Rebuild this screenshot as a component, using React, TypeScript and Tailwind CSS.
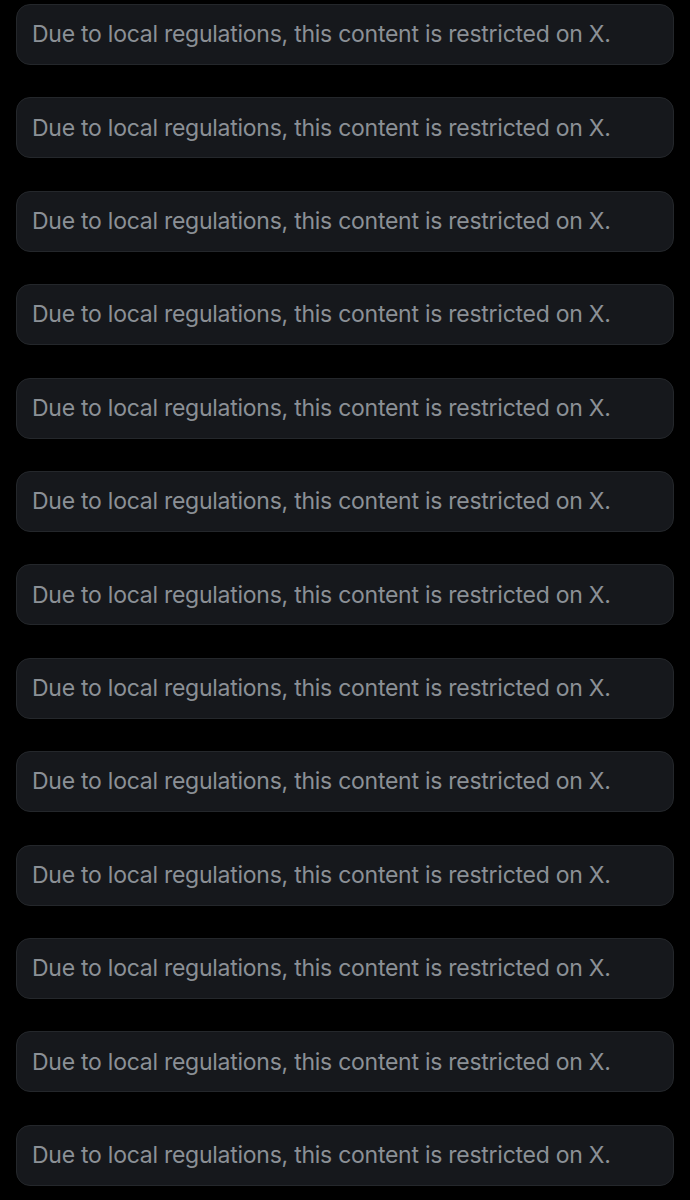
import React from "react";

const MESSAGE = "Due to local regulations, this content is restricted on X.";

const RestrictedNotice: React.FC = () => {
  return (
    <div className="h-[61px] flex items-center pl-[15px] pr-4 rounded-[14px] border border-[#24272b] bg-[#16181c]">
      <span className="text-[23px] tracking-[-0.26px] text-[#8b9096] whitespace-nowrap">{MESSAGE}</span>
    </div>
  );
};

const App: React.FC = () => {
  return (
    <div
      className="min-h-[1200px] bg-black px-4 pt-1 flex flex-col gap-[32.4px]"
      style={{ fontFamily: "Inter, 'Noto Sans', sans-serif" }}
    >
      {Array.from({ length: 13 }).map((_, i) => (
        <RestrictedNotice key={i} />
      ))}
    </div>
  );
};

export default App;
